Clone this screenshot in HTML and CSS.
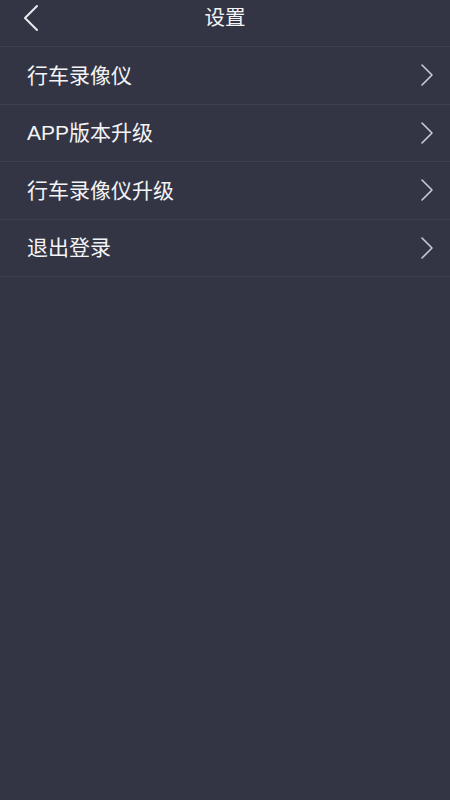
FILE: index.html
```html
<!DOCTYPE html>
<html lang="zh">
<head>
<meta charset="utf-8">
<link rel="stylesheet" href="styles.css">
</head>
<body>
<div class="page">
  <header class="bar">
    <span class="back">
      <svg width="18" height="28" viewBox="0 0 18 28"><polyline points="15,2 3,14 15,26" fill="none" stroke="#e8e8ee" stroke-width="2" stroke-linecap="round" stroke-linejoin="round"/></svg>
    </span>
    <h1 class="title">设置</h1>
  </header>
  <ul class="list">
    <li class="item"><span class="label">行车录像仪</span><svg class="chev" width="14" height="24" viewBox="0 0 14 24"><polyline points="2,2 12,12 2,22" fill="none" stroke="#c9cad3" stroke-width="1.6" stroke-linecap="round" stroke-linejoin="round"/></svg></li>
    <li class="item"><span class="label">APP版本升级</span><svg class="chev" width="14" height="24" viewBox="0 0 14 24"><polyline points="2,2 12,12 2,22" fill="none" stroke="#c9cad3" stroke-width="1.6" stroke-linecap="round" stroke-linejoin="round"/></svg></li>
    <li class="item"><span class="label">行车录像仪升级</span><svg class="chev" width="14" height="24" viewBox="0 0 14 24"><polyline points="2,2 12,12 2,22" fill="none" stroke="#c9cad3" stroke-width="1.6" stroke-linecap="round" stroke-linejoin="round"/></svg></li>
    <li class="item"><span class="label">退出登录</span><svg class="chev" width="14" height="24" viewBox="0 0 14 24"><polyline points="2,2 12,12 2,22" fill="none" stroke="#c9cad3" stroke-width="1.6" stroke-linecap="round" stroke-linejoin="round"/></svg></li>
  </ul>
</div>
</body>
</html>
```
FILE: styles.css
```css
html, body {
  margin: 0;
  padding: 0;
  background: #333545;
}
.page {
  width: 450px;
  min-height: 800px;
  background: #333545;
  font-family: "Liberation Sans", "Noto Sans CJK SC", sans-serif;
  color: #f4f4f6;
}
.bar {
  height: 46px;
  border-bottom: 1px solid #3e4152;
  display: flex;
  align-items: center;
  justify-content: center;
  position: relative;
}
.back {
  position: absolute;
  left: 22px;
  top: 4px;
  display: flex;
}
.title {
  margin: 0;
  font-size: 20.5px;
  font-weight: normal;
  line-height: 1;
  margin-top: -10px;
}
.list {
  list-style: none;
  margin: 0;
  padding: 0;
}
.item {
  height: 56.5px;
  border-bottom: 1px solid #3e4152;
  display: flex;
  align-items: center;
  justify-content: space-between;
  padding: 0 16px 0 27px;
}
.label {
  font-size: 21px;
  line-height: 1;
  font-weight: normal;
}
.chev {
  display: block;
}
```
